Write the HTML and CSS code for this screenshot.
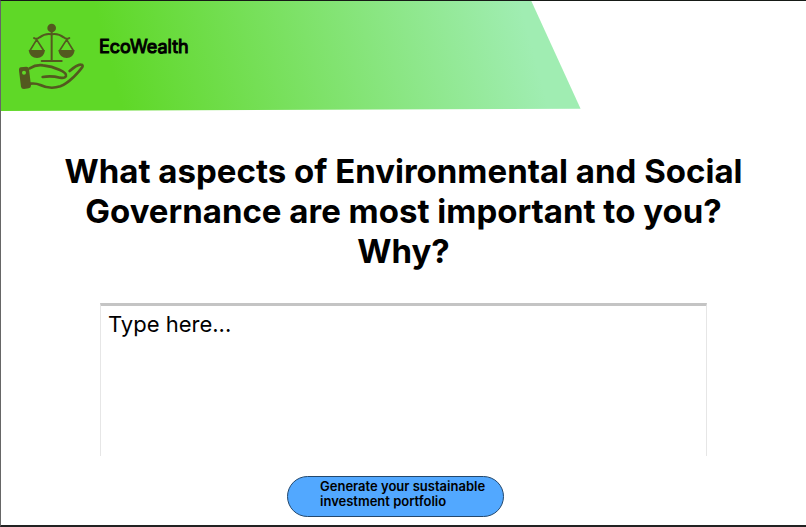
FILE: index.html
```html
<!DOCTYPE html>
<html lang="en">
<head>
  <meta charset="UTF-8">
  <meta name="viewport" content="width=device-width, initial-scale=1.0">
  <title>EcoWealth</title>
  <link rel="stylesheet" href="styles.css">
</head>
<body>
  <header class="banner">
    <svg class="logo" viewBox="27 24 198 204" fill="none" stroke="#53591f" stroke-width="8" stroke-linecap="round" stroke-linejoin="round" aria-hidden="true">
      <!-- scales -->
      <circle cx="125" cy="39" r="13" fill="#53591f" stroke="none"/>
      <path d="M125 48V137" stroke-width="6"/>
      <path d="M95 138H155" stroke-width="6"/>
      <path d="M72 69Q80 75 89 67Q106 54 125 58Q144 54 161 67Q170 75 178 69" stroke-width="6"/>
      <path d="M80 74L61 105M80 74L100 105M170 74L150 105M170 74L189 105" stroke-width="5"/>
      <path d="M56 105H105C103 121 94 129 81 129S58 121 56 105Z" fill="#53591f" stroke="none"/>
      <path d="M145 105H194C192 121 183 129 170 129S147 121 145 105Z" fill="#53591f" stroke="none"/>
      <!-- hand -->
      <path d="M32 157L49 155Q56 155 57 162L63 212Q63 219 56 220L42 222Q34 222 33 215L27 167Q26 158 32 157ZM42 167A6 6 0 1 0 42 179A6 6 0 1 0 42 167Z" fill="#53591f" fill-rule="evenodd" stroke="none"/>
      <path d="M59 160Q78 148 99 151Q126 154 148 164Q171 174 168 183Q164 191 150 188Q123 181 98 186"/>
      <path d="M62 206Q77 204 91 210Q120 224 151 214Q168 208 190 187Q209 168 217 156Q220 149 212 149Q202 148 179 168"/>
    </svg>
    <span class="brand">EcoWealth</span>
  </header>

  <main>
    <form id="promptForm">
      <h1><label for="answer">What aspects of Environmental and Social Governance are most important to you? Why?</label></h1>
      <textarea id="answer" name="answer" placeholder="Type here..."></textarea>
      <button type="submit">Generate your sustainable investment portfolio</button>
    </form>
  </main>
</body>
</html>
```
FILE: styles.css
```css
* {
  box-sizing: border-box;
}
body {
  font-family: Inter, sans-serif;
  background-color: #fff;
  color: #000;
  margin: 0;
  min-height: 100vh;
  border-top: 1px solid #161a16;
  border-left: 1px solid #666;
  border-bottom: 2px solid #222;
}
.banner {
  display: flex;
  align-items: flex-start;
  gap: 14px;
  width: 72%;
  height: 110px;
  padding: 22px 18px;
  background: linear-gradient(75deg, #5fd827 20%, #a0edb2 90%);
  clip-path: polygon(0 0, 91.5% 0, 100% 98%, 0 100%);
}
.logo {
  width: 66px;
  height: 68px;
}
.brand {
  margin-top: 12px;
  font-size: 18px;
  line-height: 24px;
  -webkit-text-stroke: 1px #000;
}
form {
  display: flex;
  flex-direction: column;
  align-items: center;
  padding: 40px 56px 8px;
}
h1 {
  max-width: 690px;
  margin: 0 0 32px;
  font-size: 33px;
  line-height: 40px;
  text-align: center;
}
textarea {
  width: 100%;
  max-width: 607px;
  height: 153px;
  padding: 4px 7px;
  border: 1px solid #e6e6e6;
  border-top: 3px solid #c4c4c4;
  border-bottom: none;
  background: #fff;
  font-family: inherit;
  font-size: 22px;
  line-height: 28px;
  resize: none;
}
textarea::placeholder {
  color: #000;
  opacity: 1;
}
button {
  width: 217px;
  height: 41px;
  margin: 20px 16px 0 0;
  padding: 0 12px 6px 32px;
  background-color: #52a8ff;
  color: #000;
  border: 1px solid #24486c;
  border-radius: 21px;
  font-family: inherit;
  font-size: 13px;
  font-weight: 600;
  line-height: 15px;
  text-align: left;
  cursor: pointer;
}
button:hover {
  background-color: #3c98f5;
}
```
